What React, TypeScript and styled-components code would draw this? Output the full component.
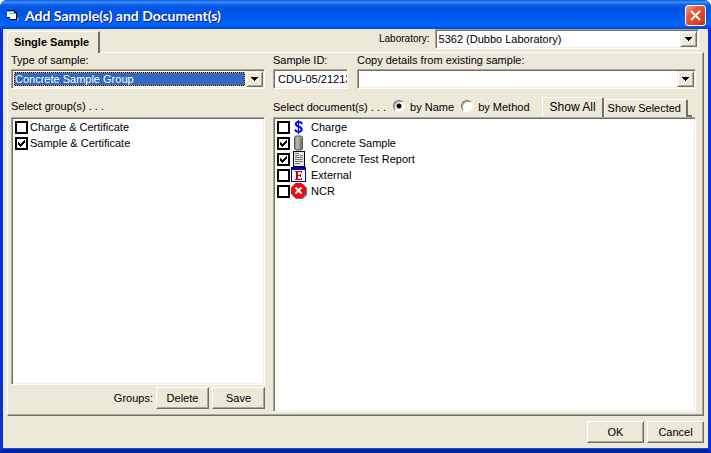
import React, { useState } from "react";
import styled, { createGlobalStyle, css } from "styled-components";

const face = "#ece9d8";
const shade = "#aca899";
const dark = "#716f64";
const pale = "#f1efe2";

const GlobalStyle = createGlobalStyle`
  * { box-sizing: border-box; }
  body { margin: 0; background: #fff; font: 11px/14px "Liberation Sans", Arial, sans-serif; color: #000; }
  button, input, select { font: inherit; color: inherit; margin: 0; }
`;

const sunken = css`
  border: 1px solid;
  border-color: ${shade} #fff #fff ${shade};
  box-shadow: inset 1px 1px ${dark}, inset -1px -1px ${pale};
`;

const Window = styled.main`
  display: flex;
  flex-direction: column;
  min-height: 100vh;
  background: ${face};
  border: solid;
  border-width: 0 3px 4px;
  border-color: #0831d9 #0831d9 #001ea0 #0831d9;
  box-shadow: inset 0 -1px #0855dd;
  border-radius: 7px 7px 0 0;
`;

const TitleBar = styled.header`
  display: flex;
  align-items: center;
  gap: 6px;
  height: 29px;
  margin: 0 -3px;
  padding: 2px 5px 0 7px;
  border-radius: 7px 7px 0 0;
  background: linear-gradient(#0a4fd8 0, #3a93ff 2px, #0a5be6 5px, #0053e1 10px, #005af0 18px, #0066ff 24px, #0060f5 26px, #0040c8 29px);
`;

const Title = styled.h1`
  flex: 1;
  margin: 0;
  color: #fff;
  font: bold 14px/18px Lato, "Noto Sans", sans-serif;
  text-shadow: 1px 1px #0a1883;
`;

const CloseButton = styled.button`
  display: grid;
  place-items: center;
  width: 21px;
  height: 21px;
  padding: 0;
  border: 1px solid #fff;
  border-radius: 3px;
  background: linear-gradient(135deg, #f0a088, #e35a36 35%, #d8431c 75%, #b5330f);
`;

const Body = styled.div`
  display: flex;
  flex: 1;
  flex-direction: column;
  padding: 0 4px 6px;
`;

const TopRow = styled.div`
  display: flex;
  justify-content: space-between;
  align-items: flex-end;
  height: 23px;
`;

const PageTab = styled.button`
  height: 22px;
  margin-bottom: -1px;
  padding: 0 9px 2px 6px;
  border: solid;
  border-width: 1px 2px 0 1px;
  border-color: #fff ${dark} #fff #fff;
  border-radius: 3px 2px 0 0;
  background: ${face};
  font-weight: bold;
  z-index: 1;
`;

const Laboratory = styled.div`
  display: flex;
  align-self: flex-start;
  align-items: center;
  gap: 5px;
  width: 320px;
  margin-right: 5px;
`;

const SmallLabel = styled.label`
  font-size: 10px;
  line-height: 20px;
`;

const Panel = styled.section`
  display: grid;
  grid-template-columns: minmax(0, 254fr) minmax(0, 423fr);
  column-gap: 8px;
  flex: 1;
  padding: 0 7px 3px 3px;
  border: 1px solid;
  border-color: #fff ${dark} ${dark} #fff;
  box-shadow: inset -1px -1px ${shade};
`;

const Column = styled.div`
  display: flex;
  flex-direction: column;
  min-width: 0;
`;

const FieldRow = styled.div`
  display: grid;
  grid-template-columns: 75px minmax(0, 1fr);
  column-gap: 9px;
`;

const Field = styled.div`
  display: flex;
  flex-direction: column;
  min-width: 0;
`;

const FieldLabel = styled.label`
  height: 16px;
`;

const TextInput = styled.input`
  ${sunken}
  width: 100%;
  height: 20px;
  padding: 0 0 0 4px;
  background: #fff;
`;

const ComboFrame = styled.div`
  ${sunken}
  display: flex;
  flex: 1;
  min-width: 0;
  min-height: 20px;
  padding: 1px;
  background: #fff;
  position: relative;
`;

const ComboSelect = styled.select<{ $active?: boolean }>`
  appearance: none;
  flex: 1;
  min-width: 0;
  margin: 1px 18px 1px 1px;
  padding: 0 0 0 1px;
  border: 0;
  outline: 0;
  border-radius: 0;
  line-height: 14px;
  background: #fff;
  ${(p) =>
    p.$active &&
    css`
      padding: 0;
      border: 1px dotted #f0a040;
      background: linear-gradient(#316ac5, #316ac5) padding-box, #000 border-box;
      color: #fff;
      line-height: 12px;
    `}
`;

const ComboArrow = styled.span`
  position: absolute;
  top: 1px;
  right: 1px;
  bottom: 1px;
  width: 17px;
  display: grid;
  place-items: center;
  background: ${face};
  border: 1px solid;
  border-color: ${pale} ${dark} ${dark} ${pale};
  box-shadow: inset 1px 1px #fff, inset -1px -1px ${shade};
  pointer-events: none;
`;

const GroupHeading = styled.div`
  height: 28px;
  padding-top: 10px;
`;

const DocHeading = styled.div`
  display: flex;
  justify-content: space-between;
  height: 28px;
`;

const SortOptions = styled.div`
  display: flex;
  align-items: flex-start;
  gap: 7px;
  padding-top: 11px;
  white-space: nowrap;
`;

const RadioLabel = styled.label`
  display: flex;
  gap: 5px;
`;

const Radio = styled.input`
  appearance: none;
  width: 12px;
  height: 12px;
  border: 1px solid;
  border-color: ${dark} #fff #fff ${dark};
  border-radius: 50%;
  background: #fff;
  box-shadow: inset 1px 1px ${shade};
  &:checked {
    background: radial-gradient(circle, #000 2px, #fff 3px);
  }
`;

const FilterTabs = styled.div`
  display: flex;
  align-items: flex-end;
  padding-right: 4px;
  &::after {
    content: "";
    width: 4px;
    height: 2px;
    background: ${dark};
  }
`;

const FilterTab = styled.button<{ $selected: boolean }>`
  height: ${(p) => (p.$selected ? "20px" : "18px")};
  padding: ${(p) => (p.$selected ? "0 6px 2px 7px" : "0 5px 1px 3px")};
  border: solid;
  border-width: 1px 2px 0 1px;
  border-color: #fff ${dark} #fff #fff;
  border-radius: 2px 2px 0 0;
  background: ${face};
  white-space: nowrap;
  font-size: ${(p) => (p.$selected ? "12px" : "11px")};
`;

const List = styled.ul`
  ${sunken}
  flex: 1;
  min-height: 160px;
  margin: 0;
  padding: 1px 2px;
  list-style: none;
  background: #fff;
`;

const ItemLabel = styled.label<{ $icon?: boolean }>`
  display: grid;
  grid-template-columns: ${(p) => (p.$icon ? "15px 20px auto" : "16px auto")};
  align-items: center;
  justify-content: start;
  height: 16px;
  white-space: nowrap;
`;

const CheckBox = styled.span`
  display: grid;
  width: 13px;
  height: 13px;
  margin-left: 1px;
  > * { grid-area: 1 / 1; }
`;

const CheckInput = styled.input`
  appearance: none;
  width: 13px;
  height: 13px;
  border: 2px solid #000;
  background: #fff;
`;

const Actions = styled.div`
  display: flex;
  justify-content: flex-end;
  align-items: center;
  gap: 3px;
`;

const GroupActions = styled(Actions)`
  padding: 2px 0 3px;
`;

const DialogActions = styled(Actions)`
  padding-top: 5px;
`;

const PushButton = styled.button<{ $wide?: boolean }>`
  width: ${(p) => (p.$wide ? "57px" : "53px")};
  height: 22px;
  padding: 0;
  border: 1px solid;
  border-color: #fff ${dark} ${dark} #fff;
  box-shadow: inset -1px -1px ${shade};
  background: ${face};
`;

const Tick = () => (
  <svg width="13" height="13" viewBox="0 0 13 13" shapeRendering="crispEdges" pointerEvents="none" aria-hidden>
    <path d="M3 5h1v1h1v1h1v-1h1v-1h1v-1h1v-1h1v3h-1v1h-1v1h-1v1h-1v1h-1v-1h-1v-1h-1z" fill="#000" />
  </svg>
);

const FormIcon = () => (
  <svg width="12" height="12" viewBox="0 0 12 12" shapeRendering="crispEdges" aria-hidden>
    <path d="M0 0h8v2h2v8H3V8H0z" fill="#000" />
    <path d="M0 2h7v5H0z" fill="#fff" />
    <path d="M0 1h7v1H0z" fill="#2dd" />
    <path d="M2 3h7v1H2z" fill="#2dd" />
    <path d="M2 4h7v5H3V7H2z" fill="#fff" />
    <path d="M10 8h2v1h-1v2h-1z" fill="#a79a80" />
  </svg>
);

const DollarIcon = () => (
  <svg width="16" height="16" viewBox="0 0 16 16" aria-hidden>
    <path d="M7.500 1v14" stroke="#00f" strokeWidth="1" />
    <path d="M11 5C10.500 2.500 5 2 4.800 5c0 3 6 2.500 6 5.500C10.500 13.500 5 13.500 4 10.500" stroke="#00f" strokeWidth="2" fill="none" />
  </svg>
);

const CylinderIcon = () => (
  <svg width="16" height="16" viewBox="0 0 16 16" aria-hidden>
    <defs>
      <linearGradient id="steel">
        <stop offset="0" stopColor="#777" />
        <stop offset=".35" stopColor="#bbb" />
        <stop offset="1" stopColor="#666" />
      </linearGradient>
    </defs>
    <path d="M3.500 2 5 1h5l1.500 1v12L10 15H5l-1.500-1z" fill="url(#steel)" stroke="#555" />
    <path d="M4 2h7v1H4z" fill="#aaa" />
  </svg>
);

const ReportIcon = () => (
  <svg width="16" height="16" viewBox="0 0 16 16" shapeRendering="crispEdges" aria-hidden>
    <path d="M2 0h12v16H2z" fill="#000" />
    <path d="M3 1h10v14H3z" fill="#e4e4e4" />
    <path d="M4 2h4v1H4zM4 4h4v1H4zM9 4h3v1H9zM4 6h8v1H4zM4 8h8v1H4zM4 10h8v1H4zM4 12h5v1H4z" fill="#777" />
  </svg>
);

const ExternalIcon = () => (
  <svg width="16" height="16" viewBox="0 0 16 16" shapeRendering="crispEdges" aria-hidden>
    <path d="M0 0h15v15H0z" fill="#0000b8" />
    <path d="M1 3h13v11H1z" fill="#fff" />
    <path d="M4 4h7v2h-1V5H7v3h2V7h1v3H9V9H7v3h3v-1h1v2H4v-1h1V5H4z" fill="#c00" />
  </svg>
);

const ErrorIcon = () => (
  <svg width="16" height="16" viewBox="0 0 16 16" aria-hidden>
    <path d="M5 1h7l4 4v7l-4 4H5l-4-4z" fill="#777" />
    <path d="M4.500 0h6L15 4.500v6L10.500 15h-6L0 10.500v-6z" fill="#f00810" />
    <path d="m4.500 4.500 6 6m0-6-6 6" stroke="#fff" strokeWidth="2" />
  </svg>
);

type ComboProps = { id: string; value?: string; active?: boolean };

const Combo = ({ id, value = "", active }: ComboProps) => (
  <ComboFrame>
    <ComboSelect id={id} $active={active} defaultValue={value}>
      <option value={value}>{value}</option>
    </ComboSelect>
    <ComboArrow>
      <svg width="7" height="4" viewBox="0 0 7 4" shapeRendering="crispEdges" aria-hidden>
        <path d="M0 0h7v1H6v1H5v1H4v1H3V3H2V2H1V1H0z" />
      </svg>
    </ComboArrow>
  </ComboFrame>
);

type ItemProps = { name: string; initial?: boolean; icon?: React.ReactNode };

const CheckItem = ({ name, initial = false, icon }: ItemProps) => {
  const [on, setOn] = useState(initial);
  return (
    <li>
      <ItemLabel $icon={!!icon}>
        <CheckBox>
          <CheckInput type="checkbox" checked={on} onChange={(e) => setOn(e.target.checked)} />
          {on && <Tick />}
        </CheckBox>
        {icon}
        <span>{name}</span>
      </ItemLabel>
    </li>
  );
};

const groups: ItemProps[] = [
  { name: "Charge & Certificate" },
  { name: "Sample & Certificate", initial: true },
];

const documents: ItemProps[] = [
  { name: "Charge", icon: <DollarIcon /> },
  { name: "Concrete Sample", icon: <CylinderIcon />, initial: true },
  { name: "Concrete Test Report", icon: <ReportIcon />, initial: true },
  { name: "External", icon: <ExternalIcon /> },
  { name: "NCR", icon: <ErrorIcon /> },
];

export default function App() {
  const [filter, setFilter] = useState("Show All");
  return (
    <>
      <GlobalStyle />
      <Window>
        <TitleBar>
          <FormIcon />
          <Title>Add Sample(s) and Document(s)</Title>
          <CloseButton aria-label="Close">
            <svg width="13" height="13" viewBox="0 0 13 13" aria-hidden>
              <path d="m2 2 9 9m0-9-9 9" stroke="#fff" strokeWidth="2" />
            </svg>
          </CloseButton>
        </TitleBar>
        <Body>
          <TopRow>
            <PageTab>Single Sample</PageTab>
            <Laboratory>
              <SmallLabel htmlFor="lab">Laboratory:</SmallLabel>
              <Combo id="lab" value="5362 (Dubbo Laboratory)" />
            </Laboratory>
          </TopRow>
          <Panel>
            <Column>
              <FieldLabel htmlFor="type">Type of sample:</FieldLabel>
              <Field>
                <Combo id="type" value="Concrete Sample Group" active />
              </Field>
              <GroupHeading>Select group(s) . . .</GroupHeading>
              <List>
                {groups.map((g) => (
                  <CheckItem key={g.name} {...g} />
                ))}
              </List>
              <GroupActions>
                <span>Groups:</span>
                <PushButton>Delete</PushButton>
                <PushButton>Save</PushButton>
              </GroupActions>
            </Column>
            <Column>
              <FieldRow>
                <Field>
                  <FieldLabel htmlFor="sample-id">Sample ID:</FieldLabel>
                  <TextInput id="sample-id" defaultValue="CDU-05/21213" />
                </Field>
                <Field>
                  <FieldLabel htmlFor="copy">Copy details from existing sample:</FieldLabel>
                  <Combo id="copy" />
                </Field>
              </FieldRow>
              <DocHeading>
                <SortOptions>
                  <span>Select document(s) . . .</span>
                  <RadioLabel>
                    <Radio type="radio" name="sort" defaultChecked />
                    by Name
                  </RadioLabel>
                  <RadioLabel>
                    <Radio type="radio" name="sort" />
                    by Method
                  </RadioLabel>
                </SortOptions>
                <FilterTabs>
                  {["Show All", "Show Selected"].map((t) => (
                    <FilterTab key={t} $selected={t === filter} onClick={() => setFilter(t)}>
                      {t}
                    </FilterTab>
                  ))}
                </FilterTabs>
              </DocHeading>
              <List>
                {documents.map((d) => (
                  <CheckItem key={d.name} {...d} />
                ))}
              </List>
            </Column>
          </Panel>
          <DialogActions>
            <PushButton $wide>OK</PushButton>
            <PushButton $wide>Cancel</PushButton>
          </DialogActions>
        </Body>
      </Window>
    </>
  );
}
